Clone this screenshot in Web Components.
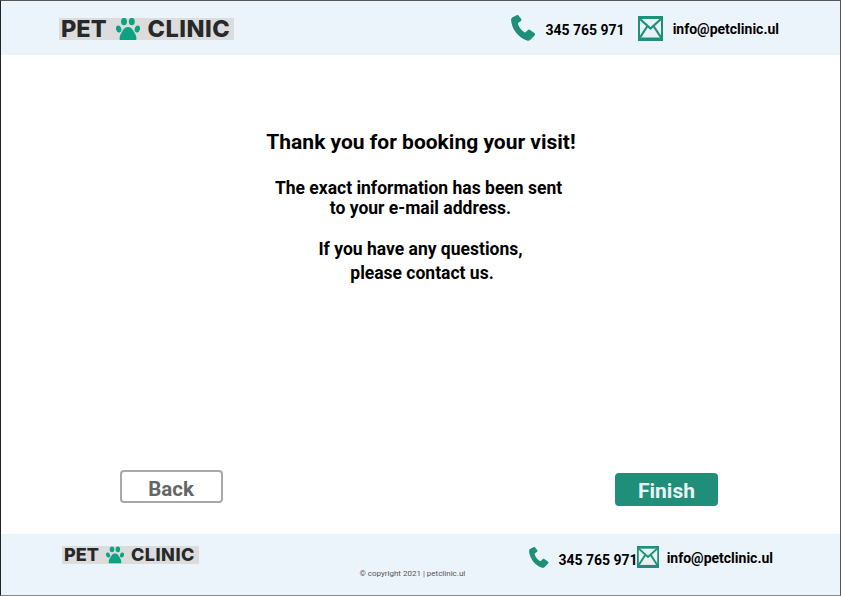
<!DOCTYPE html>
<html lang="en"><head><meta charset="utf-8"><title>Pet Clinic</title>
<style>
html,body{margin:0;padding:0;background:#fff}
body{font-family:Roboto,"Liberation Sans",sans-serif}
</style></head>
<body>
<booking-page></booking-page>
<script>
const PAW='<svg viewBox="0 0 24 22" width="100%" height="100%" fill="#0ba381"><ellipse cx="8" cy="3.500" rx="3" ry="3.700"/><ellipse cx="15.800" cy="3.500" rx="3" ry="3.700"/><ellipse cx="2.700" cy="11" rx="2.600" ry="3.500" transform="rotate(-15 2.700 11)"/><ellipse cx="21.300" cy="11" rx="2.600" ry="3.500" transform="rotate(15 21.300 11)"/><path d="M12 9c3.200 0 5 2.800 6.500 5.800 1 1.900 1.800 3 1.800 4.700V22H3.700v-2.500c0-1.700.8-2.800 1.800-4.700C7 11.800 8.800 9 12 9z"/></svg>';
const PHONE='<svg viewBox="0 0 26 26" width="100%" height="100%" fill="#1f8f7a"><path d="M5.600.3 1.600 2.300C.4 3 0 4.200.1 5.600c.5 4.400 2.200 8.700 5 12.200 2.900 3.600 6.600 6.300 10.900 7.800 1.300.4 2.500.1 3.400-.9l4.200-4.300c.7-.7.6-1.700-.2-2.300l-4.400-3.200c-.7-.5-1.500-.4-2.100.2l-2 2c-.4.4-.9.5-1.400.2-1.500-.9-2.900-2.100-4-3.500-1.100-1.400-2-3-2.500-4.700-.2-.5 0-1 .4-1.300l2.300-1.600c.7-.5.9-1.300.6-2.100L7.900 1C7.500.1 6.500-.2 5.600.3z"/></svg>';
const MAIL='<svg viewBox="0 0 25 25" width="100%" height="100%"><rect width="25" height="25" fill="#1f8f7a"/><rect x="2" y="3" width="21" height="18.500" fill="#e8f1f4"/><path d="M2 3 12.500 12.500 23 3M2 21.500 9.500 10M23 21.500 15.500 10" fill="none" stroke="#1f8f7a" stroke-width="2.200"/></svg>';

function def(name,html){
  customElements.define(name,class extends HTMLElement{
    constructor(){super();this.attachShadow({mode:'open'}).innerHTML=html;}
  });
}

def('pet-logo',`<style>
:host{display:inline-flex;align-items:center;background:#dcdcdc;color:#26292b;
 font:800 var(--logo-size,24px)/var(--logo-h,22px) Inter,"Liberation Sans",sans-serif;
 height:var(--logo-h,22px);padding:0 4px 0 2px;white-space:nowrap}
.paw{width:var(--paw-w,24px);height:var(--logo-h,22px);margin:0 var(--paw-r,8px) 0 var(--paw-l,9px);flex:none}
.cl{letter-spacing:.5px}
span{display:block}
</style><span>PET</span><span class="paw">${PAW}</span><span class="cl">CLINIC</span>`);

def('contact-item',`<style>
:host{display:inline-flex;align-items:center;font:700 14px/16px Roboto,"Liberation Sans",sans-serif;color:#000;white-space:nowrap}
.i{width:var(--icon,25px);height:var(--icon,25px);margin-right:var(--icon-gap,10px);flex:none}
.i ::slotted(*){display:block;width:100%;height:100%}
.t{margin-top:var(--text-top,0);}
</style><span class="i"><slot name="icon"></slot></span><span class="t"><slot></slot></span>`);

def('site-header',`<style>
:host{display:flex;align-items:center;height:54px;background:#ecf4fb;padding:0 0 0 58px;
 --logo-size:23.500px;--logo-h:22px;--paw-w:24px;--paw-l:9px;--paw-r:8px}
pet-logo{margin-top:2px}
.c{margin-left:auto;display:flex;align-items:center;margin-right:61px}
.ph{--icon:26px;--icon-gap:8px;--text-top:4px;margin-right:13px}
.ml{--icon:25px;--icon-gap:10px;--text-top:2px}
</style><pet-logo></pet-logo><div class="c">
<contact-item class="ph"><span slot="icon">${PHONE}</span>345 765 971</contact-item>
<contact-item class="ml"><span slot="icon">${MAIL}</span>info@petclinic.ul</contact-item></div>`);

def('site-footer',`<style>
:host{display:block;height:61px;background:#ecf4fb;padding:12px 67px 0 61px;box-sizing:border-box;
 --logo-size:18px;--logo-h:18px;--paw-w:18px;--paw-l:7px;--paw-r:7px}
.row{display:flex;align-items:flex-start}
.c{margin-left:auto;display:flex;align-items:center}
.ph{--icon:21px;--icon-gap:8px;--text-top:5px;margin-right:-1px}
.ml{--icon:22px;--icon-gap:8px;--text-top:2px}
small{display:block;font:400 8px/10px Roboto,"Liberation Sans",sans-serif;color:#555;margin:1px 0 0 297.500px}
</style><div class="row"><pet-logo></pet-logo><div class="c">
<contact-item class="ph"><span slot="icon">${PHONE}</span>345 765 971</contact-item>
<contact-item class="ml"><span slot="icon">${MAIL}</span>info@petclinic.ul</contact-item></div></div>
<small>© copyright 2021 | petclinic.ul</small>`);

def('thanks-message',`<style>
:host{display:block;text-align:center;color:#000;font-family:Roboto,"Liberation Sans",sans-serif}
h1{font:700 21px/26px Roboto,"Liberation Sans",sans-serif;margin:0 0 23px;padding-left:3px}
p{font:700 17.500px/20px Roboto,"Liberation Sans",sans-serif;margin:0;padding-right:2px}
p .s{padding-left:4px}
.b{margin-top:19px;line-height:24px;padding:0 0 0 2px}
.l2{padding-left:3px}
</style><h1>Thank you for booking your visit!</h1>
<p>The exact information has been sent<br><span class="s">to your e-mail address.</span></p>
<p class="b">If you have any questions,<br><span class="l2">please contact us.</span></p>`);

def('action-button',`<style>
:host{display:inline-flex;align-items:center;justify-content:center;box-sizing:border-box;width:103px;height:33px;border-radius:4px;padding-top:4px;
 font:700 21px/1 Roboto,"Liberation Sans",sans-serif;cursor:pointer}
:host([variant=ghost]){background:#fff;border:2px solid #a9a9a9;color:#666;font-size:20.500px;padding-top:5px}
:host([variant=primary]){background:#1f8f7a;color:#e9f3f6}
</style><slot></slot>`);

def('booking-page',`<style>
:host{display:flex;flex-direction:column;box-sizing:border-box;width:841px;height:596px;background:#fff;
 border:1px solid #555;border-left:1.500px solid #222;border-bottom-color:#888;overflow:hidden}
main{flex:1;display:flex;flex-direction:column;padding-top:74px}
thanks-message{margin-right:2px}
.actions{margin-top:auto;display:flex;justify-content:space-between;align-items:flex-start;padding:0 122px 28px 118.500px}
.actions action-button[variant=primary]{margin-top:3px}
</style><site-header></site-header><main><thanks-message></thanks-message>
<div class="actions"><action-button variant="ghost">Back</action-button><action-button variant="primary">Finish</action-button></div></main><site-footer></site-footer>`);
</script>
</body></html>
